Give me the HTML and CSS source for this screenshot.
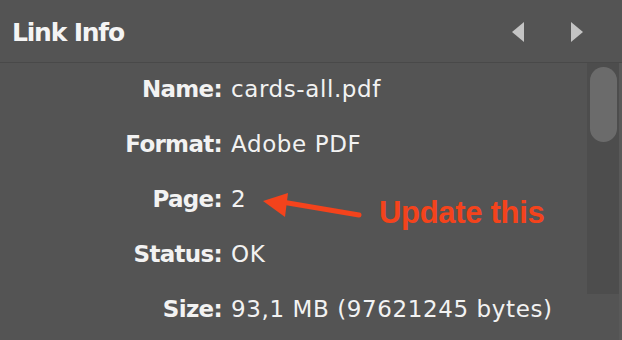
FILE: index.html
```html
<!DOCTYPE html>
<html lang="en">

<head>
    <meta charset="UTF-8">
    <title>Link Info</title>
    <link rel="stylesheet" href="styles.css">
</head>

<body>
    <div class="panel">
        <div class="header">
            <div class="title">Link Info</div>
            <div class="nav">
                <span class="nav-btn prev"></span>
                <span class="nav-btn next"></span>
            </div>
        </div>
        <div class="content">
            <div class="info">
                <div class="label">Name:</div>
                <div class="value">cards-all.pdf</div>
                <div class="label">Format:</div>
                <div class="value">Adobe PDF</div>
                <div class="label">Page:</div>
                <div class="value">2</div>
                <div class="label">Status:</div>
                <div class="value">OK</div>
                <div class="label">Size:</div>
                <div class="value">93,1 MB (97621245 bytes)</div>
            </div>
            <div class="scroll-track">
                <div class="scroll-thumb"></div>
            </div>
            <div class="edge"></div>
        </div>

        <svg class="callout-arrow" width="110" height="34" viewBox="0 0 110 34">
            <line x1="20" y1="11" x2="97" y2="24" stroke="#f4431c" stroke-width="5" stroke-linecap="round" />
            <polygon points="1,10 26,2 23,26" fill="#f4431c" />
        </svg>
        <div class="callout-text">Update this</div>
    </div>
</body>

</html>
```

FILE: styles.css
```css
* {
    margin: 0;
    padding: 0;
    box-sizing: border-box;
}

body {
    background-color: #545454;
    font-family: "DejaVu Sans", "Liberation Sans", sans-serif;
    color: #f2f2f2;
}

.panel {
    position: relative;
    width: 622px;
    height: 340px;
    overflow: hidden;
    background-color: #545454;
}

.header {
    display: flex;
    align-items: center;
    justify-content: space-between;
    height: 63px;
    padding-left: 12px;
    border-bottom: 1px solid #494949;
}

.title {
    font-size: 25px;
    font-weight: bold;
    color: #f4f4f4;
    letter-spacing: -1.2px;
    padding-top: 2px;
}

.nav {
    display: flex;
    gap: 47px;
    margin-right: 39px;
    padding-top: 2px;
}

.nav-btn {
    display: block;
    width: 0;
    height: 0;
    border-top: 10px solid transparent;
    border-bottom: 10px solid transparent;
}

.prev {
    border-right: 12px solid #c4c4c4;
}

.next {
    border-left: 12px solid #c4c4c4;
}

.content {
    display: flex;
    height: 277px;
}

.info {
    flex: 1;
    display: grid;
    grid-template-columns: 222px auto;
    grid-auto-rows: 55px;
    column-gap: 9px;
    align-items: center;
    align-content: start;
    margin-top: -2px;
    font-size: 23px;
}

.label {
    font-weight: bold;
    text-align: right;
    letter-spacing: -0.7px;
}

.value {
    letter-spacing: 0.6px;
}

.scroll-track {
    width: 32px;
    height: 231px;
    padding: 4px 2px 0 3px;
    background-color: #4d4d4d;
}

.scroll-thumb {
    width: 27px;
    height: 75px;
    border-radius: 14px;
    background-color: #6b6b6b;
}

.edge {
    width: 3px;
    background-color: #595959;
}

.callout-arrow {
    position: absolute;
    left: 262px;
    top: 191px;
}

.callout-text {
    position: absolute;
    left: 379px;
    top: 195px;
    font-family: "Liberation Sans", Arial, sans-serif;
    font-weight: bold;
    font-size: 31px;
    color: #f4431c;
    letter-spacing: -0.3px;
}
```
